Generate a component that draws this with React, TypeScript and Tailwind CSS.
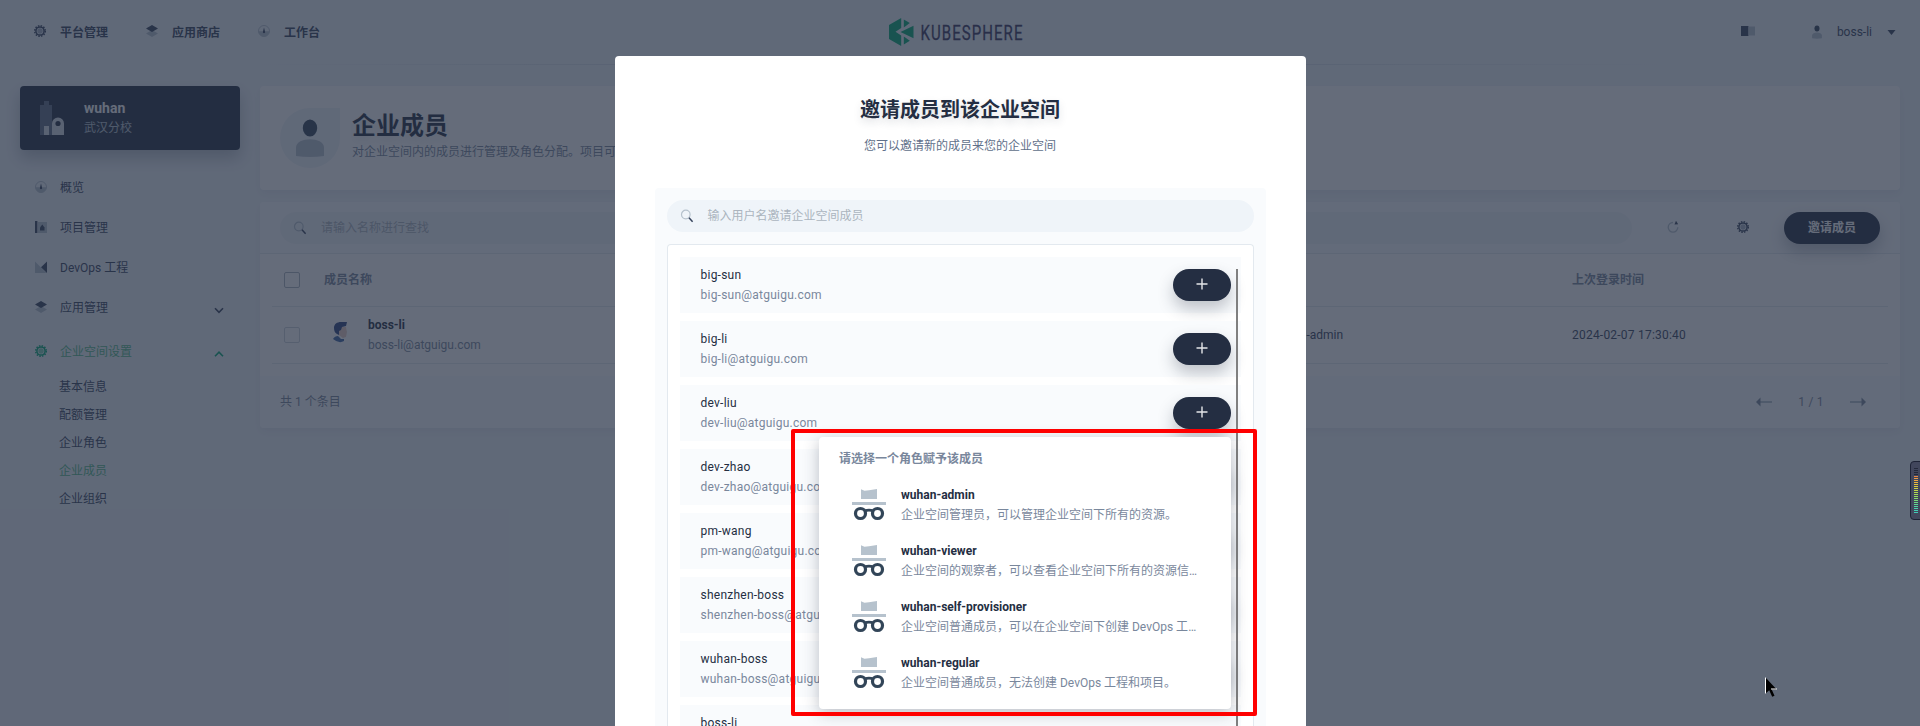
import React from "react";

type IconProps = { className?: string; dark?: string; light?: string };

const Gear = ({ className = "", dark = "#36435c", light = "#a3b0be" }: IconProps) => (
  <svg viewBox="0 0 16 16" className={className} width="16" height="16">
    <circle cx="8" cy="8" r="5.3" fill="none" stroke={dark} strokeWidth="1.5" strokeDasharray="1.5 1.275" />
    <circle cx="8" cy="8" r="4.1" fill="none" stroke={dark} strokeWidth="1.5" />
    <circle cx="8" cy="8" r="2.7" fill={light} />
  </svg>
);

const Layers = ({ className = "" }: IconProps) => (
  <svg viewBox="0 0 16 16" className={className} width="16" height="16">
    <path d="M2 10.4 8 7l6 3.4L8 14z" fill="#b6c2cd" />
    <path d="M2 5.4 8 2l6 3.4L8 9z" fill="#36435c" />
  </svg>
);

const Dashboard = ({ className = "" }: IconProps) => (
  <svg viewBox="0 0 16 16" className={className} width="16" height="16">
    <circle cx="8" cy="8" r="5.5" fill="none" stroke="#b6c2cd" strokeWidth="1" />
    <path d="M2.5 8.2h11a5.5 5.5 0 0 1-11 0z" fill="#b6c2cd" />
    <path d="m8 4.5 1.1 4.2a1.15 1.15 0 1 1-2.2 0z" fill="#36435c" />
  </svg>
);

const Project = () => (
  <svg viewBox="0 0 16 16" width="16" height="16">
    <path d="M5 3h9v11H5z" fill="#b6c2cd" />
    <path d="M2 2h2.4v12H2z" fill="#36435c" />
    <path d="m9.3 5.5 2.2 3v3H7v-3z" fill="#36435c" />
  </svg>
);

const Strategy = () => (
  <svg viewBox="0 0 16 16" width="16" height="16">
    <path d="M2 2.5 13.5 14H2z" fill="#b6c2cd" />
    <path d="M14 2.5V14L8 8.3z" fill="#36435c" />
  </svg>
);

const Search = () => (
  <svg viewBox="0 0 16 16" width="16" height="16">
    <circle cx="6.8" cy="6.5" r="4.3" fill="none" stroke="#b6c2cd" strokeWidth="1.2" />
    <path d="m10 9.8 3.6 4" stroke="#36435c" strokeWidth="1.5" />
  </svg>
);

const Chevron = ({ up = false }: { up?: boolean }) => (
  <svg viewBox="0 0 12 12" width="12" height="12" fill="none" strokeWidth="1.6">
    {up ? <path d="m2 8.3 4-4.1 4 4.1" stroke="#00aa72" /> : <path d="m2 4.2 4 4.1 4-4.1" stroke="#36435c" />}
  </svg>
);

const Incognito = () => (
  <svg viewBox="0 0 40 40" width="40" height="40">
    <path d="M12 4.2 15.500 5.700 20 5.300 28 4V14H12z" fill="#b6c2cd" />
    <path d="M3 17h34v3H3z" fill="#b6c2cd" />
    <circle cx="11.500" cy="28.500" r="5" fill="none" stroke="#324558" strokeWidth="3.200" />
    <circle cx="28.500" cy="28.500" r="5" fill="none" stroke="#324558" strokeWidth="3.200" />
    <path d="M15.500 26q4.500-1.800 9 0" fill="none" stroke="#324558" strokeWidth="2.600" />
  </svg>
);

const Person = ({ size }: { size: number }) => (
  <svg viewBox="0 0 40 40" width={size} height={size}>
    <ellipse cx="20" cy="10" rx="7.2" ry="8.6" fill="#324558" />
    <path d="M6 38V29.5C6 24 13 21.2 20 21.2S34 24 34 29.5V38q-14 2-28 0z" fill="#b6c2cd" />
  </svg>
);

const Arrow = ({ flip = false }: { flip?: boolean }) => (
  <svg viewBox="0 0 18 12" width="18" height="12" className={flip ? "rotate-180" : ""}>
    <path d="M5 5h12v2H5z" fill="#b6c2cd" />
    <path d="M1 6 5.5 1.6v8.8z" fill="#79879c" />
  </svg>
);

const Logo = () => (
  <svg viewBox="0 0 136 30" width="136" height="30">
    <g fill="#00aa72">
      <path d="M1 8 13.2 1v10L7.500 14.800l5.700 3.800V29L1 22z" />
      <path d="m15.800 2.500 6 3.600-6 4.400z" />
      <path d="M25.500 8.700v12.600L12.500 15z" />
      <path d="m15.800 19.500 6 4.300-6 3.700z" />
    </g>
    <text x="32.500" y="23" fontSize="21" fontFamily="Roboto, sans-serif" fontWeight="400" letterSpacing="1.500" fill="#36325a" stroke="#36325a" strokeWidth="0.300" textLength="103" lengthAdjust="spacingAndGlyphs">
      KUBESPHERE
    </text>
  </svg>
);

const NavItem = ({ icon, label }: { icon: React.ReactNode; label: string }) => (
  <div className="flex items-center gap-3">
    <span className="-mt-0.5">{icon}</span>
    <span className="pt-0.5 font-bold text-[#36435c]">{label}</span>
  </div>
);

const MenuItem = ({ icon, label }: { icon: React.ReactNode; label: string }) => (
  <div className="flex h-10 items-center gap-[11px] pl-[13px] text-[#36435c]">
    {icon}
    <span className="pt-0.5">{label}</span>
  </div>
);

const members = ["big-sun", "big-li", "dev-liu", "dev-zhao", "pm-wang", "shenzhen-boss", "wuhan-boss", "boss-li"];
const joined = ["boss-li"];

const roles = [
  ["wuhan-admin", "企业空间管理员，可以管理企业空间下所有的资源。"],
  ["wuhan-viewer", "企业空间的观察者，可以查看企业空间下所有的资源信息。"],
  ["wuhan-self-provisioner", "企业空间普通成员，可以在企业空间下创建 DevOps 工程和项目。"],
  ["wuhan-regular", "企业空间普通成员，无法创建 DevOps 工程和项目。"],
];

const meter = [
  "#23283a", "#23283a", "#23283a", "#23283a", "#f08a45", "#f09a42", "#efa940", "#ecb83d", "#e6c43c", "#dccc3e",
  "#d0d243", "#c2d748", "#b4da4f", "#a5dc57", "#96dd60", "#87dd6a", "#78dc77", "#6adb85", "#5dd993", "#52d6a0",
  "#49d2ab", "#44ceb3", "#42cab8",
];

function Header() {
  return (
    <header className="flex h-16 items-center justify-between pl-8 pr-6">
      <div className="flex w-[792px] gap-9">
        <NavItem icon={<Gear />} label="平台管理" />
        <NavItem icon={<Layers />} label="应用商店" />
        <NavItem icon={<Dashboard />} label="工作台" />
      </div>
      <Logo />
      <div className="flex w-[808px] items-center justify-end">
        <svg viewBox="0 0 16 12" width="16" height="12" className="mr-[54px] -mt-0.5">
          <path d="M1 1h7.500v10H1z" fill="#36435c" />
          <path d="M8.500 1.500H15v9H8.500z" fill="#b6c2cd" />
        </svg>
        <Person size={14} />
        <span className="ml-[13px] text-[#36435c]">boss-li</span>
        <svg viewBox="0 0 8 5" width="9" height="5" className="ml-[15px]">
          <path d="M0 0h8L4 5z" fill="#36435c" />
        </svg>
      </div>
    </header>
  );
}

function Sidebar() {
  return (
    <aside className="w-[220px]">
      <div className="flex h-16 items-center rounded bg-[#242e42] pl-[19px] shadow-[0_8px_16px_0_rgba(36,46,66,0.28)]">
        <svg viewBox="0 0 26 36" width="26" height="36">
          <path d="M1 5h4V1h5v4h3v30H1z" fill="#5f6d82" />
          <path d="M13 35V23.500a6 6 0 0 1 12 0V35z" fill="#d8dee5" />
          <circle cx="19" cy="23.500" r="2.600" fill="#242e42" />
          <path d="M5 26h5v9H5z" fill="#d8dee5" />
        </svg>
        <div className="ml-[19px] leading-5">
          <div className="text-sm leading-5 font-bold text-white">wuhan</div>
          <div className="text-[#b6c2cd]">武汉分校</div>
        </div>
      </div>
      <nav className="mt-[17px]">
        <MenuItem icon={<Dashboard />} label="概览" />
        <MenuItem icon={<Project />} label="项目管理" />
        <MenuItem icon={<Strategy />} label="DevOps 工程" />
        <div className="flex items-center justify-between pr-[15px]">
          <MenuItem icon={<Layers />} label="应用管理" />
          <span className="mt-1.5"><Chevron /></span>
        </div>
        <div className="mt-1 flex items-center justify-between pr-[15px]">
          <div className="flex h-10 items-center gap-[11px] pl-[13px] text-[#55bc8a]">
            <Gear dark="#00aa72" light="#7fd0b4" />
            <span className="pt-0.5">企业空间设置</span>
          </div>
          <span className="mt-1.5"><Chevron up /></span>
        </div>
        <ul className="mt-0.5 pl-[39px] leading-7 text-[#36435c]">
          <li>基本信息</li>
          <li>配额管理</li>
          <li>企业角色</li>
          <li className="text-[#55bc8a]">企业成员</li>
          <li>企业组织</li>
        </ul>
      </nav>
    </aside>
  );
}

function Content() {
  return (
    <main className="w-[1640px]">
      <section className="flex h-[104px] items-center rounded bg-white px-5 shadow-[0_4px_8px_0_rgba(36,46,66,0.06)]">
        <div className="flex size-[60px] items-center justify-center rounded-full rounded-tr-none bg-[#eff4f9]">
          <Person size={40} />
        </div>
        <div className="ml-3 h-[60px]">
          <h1 className="pt-px text-2xl leading-[34px] font-bold text-[#242e42] [text-shadow:0_4px_8px_rgba(36,46,66,0.1)]">企业成员</h1>
          <p className="-mt-px leading-5 whitespace-nowrap text-[#79879c]">对企业空间内的成员进行管理及角色分配。项目可</p>
        </div>
      </section>
      <section className="mt-3 overflow-hidden rounded bg-white shadow-[0_4px_8px_0_rgba(36,46,66,0.06)]">
        <div className="flex h-[52px] items-center border-b border-[#e3e9ef] bg-[#f9fbfd] px-5">
          <div className="flex h-8 w-[1352px] items-center rounded-full bg-[#eff4f9] pl-3 text-[#abb4be]">
            <Search />
            <span className="ml-[13px] pt-px">请输入名称进行查找</span>
          </div>
          <svg viewBox="0 0 16 16" width="16" height="16" className="ml-[33px] -mt-0.5">
            <path d="M8 3.500a4.800 4.800 0 1 0 4.800 4.800" fill="none" stroke="#b6c2cd" strokeWidth="1.300" />
            <path d="M9.500 5.500 11 1.800l2.200 3.500z" fill="#36435c" />
          </svg>
          <span className="ml-[54px] -mt-0.5"><Gear /></span>
          <button className="ml-auto h-8 w-24 rounded-full bg-[#242e42] font-bold text-white shadow-[0_8px_16px_0_rgba(36,46,66,0.28)]">邀请成员</button>
        </div>
        <div className="mx-3 flex h-[53px] items-center border-b border-[#e3e9ef] font-bold text-[#79879c]">
          <span className="ml-3 size-4 rounded-xs border border-[#abb4be]" />
          <span className="ml-6 w-[1248px]">成员名称</span>
          <span>上次登录时间</span>
        </div>
        <div className="mx-3 flex h-[57px] items-center border-b border-[#e3e9ef] text-[#36435c]">
          <span className="ml-3 size-4 rounded-xs border border-[#ccd3db]" />
          <svg viewBox="0 0 16 22" width="16" height="24" className="ml-8 -mt-1.5">
            <path d="M5 6h9l.5 3 .5 2-1 5-3 1-4-3z" fill="#e9cdc3" />
            <path d="M2 7C2 3 5 1 9 1h6l-1 4-4 1-1 3-2 1v4l-2-1C3 12 2 10 2 7z" fill="#2c4580" />
            <path d="M1 18c1-2 3-3 5-3l3 3 3 0v2q-5 3-11-2z" fill="#3d66a5" />
          </svg>
          <div className="ml-5 w-[903px] leading-5">
            <div className="font-bold text-[#242e42]">boss-li</div>
            <div className="text-[#79879c]">boss-li@atguigu.com</div>
          </div>
          <span className="w-[301px]">wuhan-admin</span>
          <span className="tracking-[0.22px]">2024-02-07 17:30:40</span>
        </div>
        <div className="mt-3 flex h-[52px] items-center bg-[#f9fbfd] px-5 text-[#79879c]">
          <span>共 1 个条目</span>
          <div className="ml-auto flex items-center pr-[13px]">
            <Arrow />
            <span className="w-[76px] text-center tracking-[0.2px]">1 / 1</span>
            <Arrow flip />
          </div>
        </div>
      </section>
    </main>
  );
}

function MemberRow({ name }: { name: string }) {
  return (
    <li className="flex h-14 shrink-0 items-center justify-between bg-[#f9fbfd] pl-[21px] pr-2.5">
      <div className="leading-5 tracking-[0.24px]">
        <div className="text-[#242e42]">{name}</div>
        <div className="text-[#79879c]">{name}@atguigu.com</div>
      </div>
      {!joined.includes(name) && (
        <button className="flex h-8 w-[58px] items-center justify-center rounded-full bg-[#242e42] shadow-[0_8px_16px_0_rgba(36,46,66,0.28)]">
          <svg viewBox="0 0 12 12" width="12" height="12" className="-mt-0.5">
            <path d="M.5 6h11M6 .5v11" stroke="#e4e6e9" strokeWidth="1.400" />
          </svg>
        </button>
      )}
    </li>
  );
}

function RoleMenu() {
  return (
    <div className="absolute top-[437px] left-[819px] h-[272px] w-[412px] rounded bg-white pt-3 shadow-[0_4px_16px_0_rgba(36,46,66,0.3)]">
      <div className="pl-5 leading-5 font-bold text-[#79879c]">请选择一个角色赋予该成员</div>
      <ul className="mt-2">
        {roles.map(([name, desc]) => (
          <li key={name} className="flex h-14 items-center pl-[30px]">
            <Incognito />
            <div className="ml-3 w-[300px] leading-5">
              <div className="font-bold text-[#242e42]">{name}</div>
              <div className="truncate text-[#79879c]">{desc}</div>
            </div>
          </li>
        ))}
      </ul>
    </div>
  );
}

function InviteDialog() {
  return (
    <div className="absolute inset-0 flex justify-center overflow-hidden bg-[rgba(35,45,65,0.7)] pt-14">
      <div className="flex h-[670px] w-[691px] flex-col rounded-t bg-white px-10">
        <h2 className="mt-[39px] text-center text-xl leading-[30px] font-bold text-[#242e42] [text-shadow:0_4px_8px_rgba(36,46,66,0.15)]">邀请成员到该企业空间</h2>
        <p className="mt-[11px] text-center leading-5 text-[#5f708a]">您可以邀请新的成员来您的企业空间</p>
        <div className="mt-8 flex min-h-0 flex-1 flex-col rounded-t bg-[#f9fbfd] px-3 pt-3">
          <div className="flex h-8 shrink-0 items-center rounded-full bg-[#eff4f9] pl-3 text-[#abb4be]">
            <Search />
            <span className="ml-[13px]">输入用户名邀请企业空间成员</span>
          </div>
          <div className="relative mt-3 min-h-0 flex-1 overflow-hidden rounded-t border border-b-0 border-[#e3e9ef] bg-white px-3 pt-3">
            <ul className="flex flex-col gap-2">
              {members.map((name) => (
                <MemberRow key={name} name={name} />
              ))}
            </ul>
            <div className="absolute top-6 right-[15px] h-[500px] w-0.5 bg-[#808080]" />
          </div>
        </div>
      </div>
    </div>
  );
}

export default function App() {
  return (
    <div className="relative h-[726px] w-[1920px] overflow-hidden bg-[#eff4f9] font-[Roboto,'Noto_Sans_CJK_SC',sans-serif] text-xs">
      <Header />
      <div className="mx-[240px] h-px bg-linear-to-r from-transparent via-[#c5d0da] to-transparent" />
      <div className="mt-[21px] flex gap-5 px-5">
        <Sidebar />
        <Content />
      </div>
      <InviteDialog />
      <RoleMenu />
      <div className="absolute top-[429px] left-[791px] h-[287px] w-[466px] rounded-xs border-4 border-[#ff0000]" />
      <div className="absolute top-[461px] left-[1910px] flex h-[59px] w-3 flex-col gap-px rounded-l border border-[#1e2336] bg-[#41465c] pt-1.5 pl-[3px]">
        {meter.map((color, i) => (
          <span key={i} className="h-px w-1 shrink-0" style={{ backgroundColor: color }} />
        ))}
      </div>
      <svg viewBox="0 0 13 21" width="13" height="21" className="absolute top-[677px] left-[1765px]">
        <path d="M.5.500v16l3.700-3.300 3 6.600 2.300-1-2.800-6.300h5z" fill="#000" />
        <path d="M.5.500v16M6 12h6" stroke="#fff" strokeWidth="1" />
      </svg>
    </div>
  );
}
